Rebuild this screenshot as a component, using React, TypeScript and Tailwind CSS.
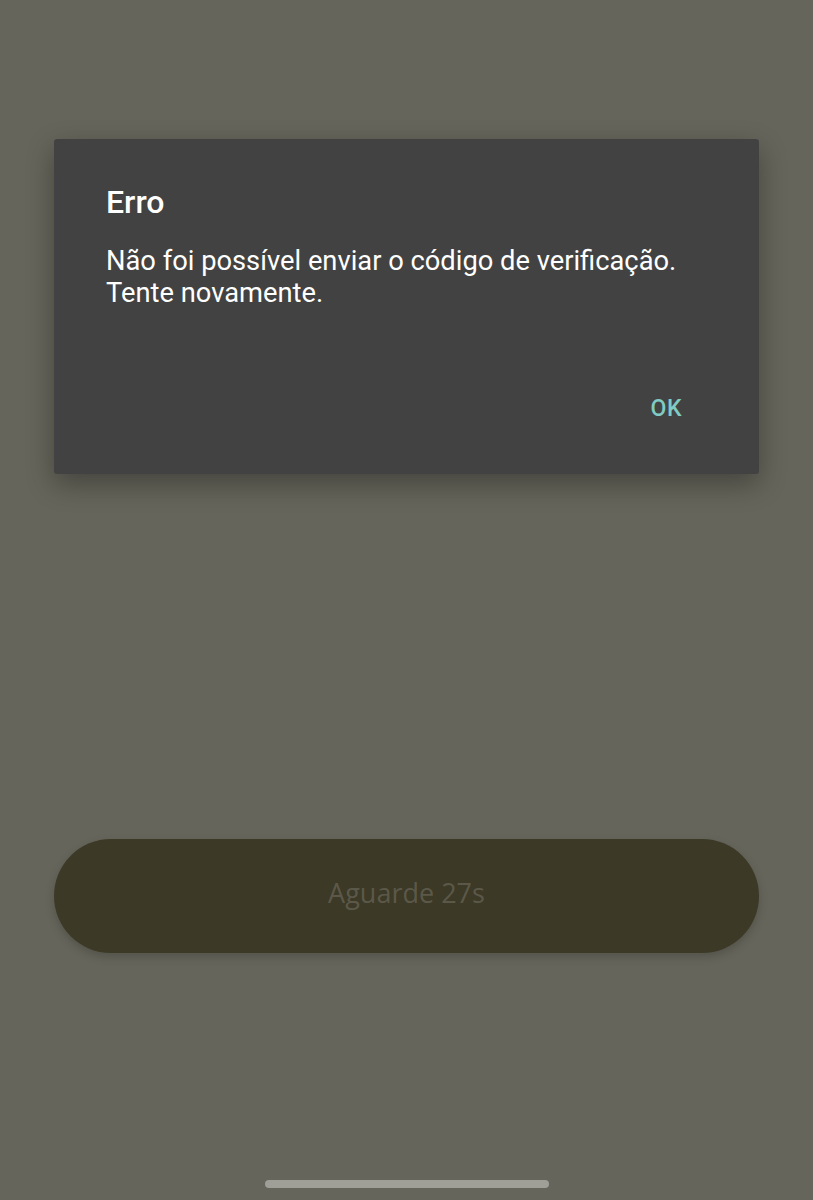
export default function App() {
  return (
    <div className="flex h-[1200px] w-full flex-col bg-[#65655b] px-[54px] pt-[139px] font-['Roboto','Liberation_Sans',sans-serif]">
      {/* error dialog */}
      <div className="flex flex-col rounded-[3px] bg-[#424242] pl-[52px] pr-[77px] pt-[44px] pb-[53px] shadow-[0_10px_28px_rgba(0,0,0,0.32)]">
        <h2 className="text-[32px] leading-[38px] font-medium text-white">Erro</h2>
        <p className="mt-[24px] text-[27.3px] leading-[32px] text-white">
          Não foi possível enviar o código de verificação.
          <br />
          Tente novamente.
        </p>
        <div className="mt-[88px] flex justify-end">
          <button className="text-[23px] leading-[24px] font-medium tracking-[0.5px] text-[#80cbc4]">OK</button>
        </div>
      </div>

      {/* disabled countdown button */}
      <button className="mt-[365px] flex h-[114px] w-full items-center justify-center rounded-full bg-[#3c3926] shadow-[0_4px_10px_rgba(0,0,0,0.18)]">
        <span className="-mt-[6px] font-['Open_Sans','Liberation_Sans',sans-serif] text-[27px] font-medium text-[#5b5849]">Aguarde 27s</span>
      </button>

      <div className="mt-auto mb-[12px] flex justify-center">
        <div className="h-[8px] w-[284px] rounded-full bg-[#9f9f98]" />
      </div>
    </div>
  );
}
